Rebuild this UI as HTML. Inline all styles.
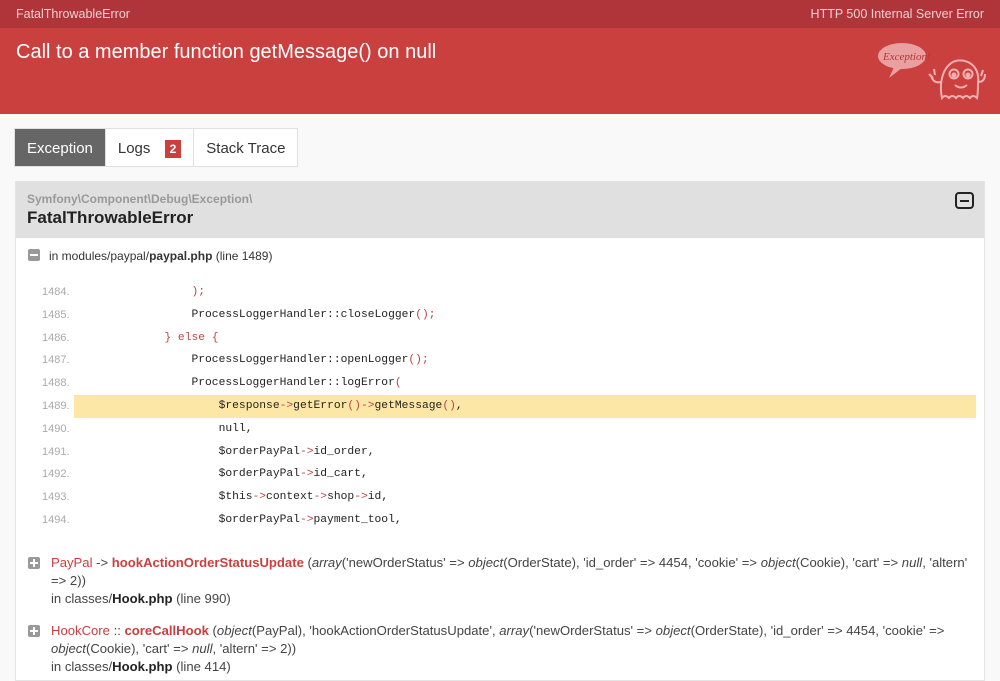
<!DOCTYPE html>
<html><head><meta charset="utf-8"><style>
*{margin:0;padding:0;box-sizing:border-box}
body{width:1000px;height:677px;overflow:hidden;background:#f9f9f9;font-family:"Liberation Sans",sans-serif;color:#222}
.top{height:28px;background:#b0353a;color:#f1d0d0;font-size:12.5px;display:flex;justify-content:space-between;align-items:center;padding:0 16px}
.hd{height:86px;background:#c9403e;color:#fff;font-size:20px;padding:13px 16px;position:relative}
.tabs{position:absolute;left:14px;top:128px;display:flex;height:39px;border:1px solid #e0e0e0;background:#fff}
.tab{padding:0 12px;font-size:15px;line-height:39px;color:#333;border-right:1px solid #e0e0e0}
.tab.a{background:#666;color:#fff}
.bd{display:inline-block;background:#c9403e;color:#fff;font-weight:bold;font-size:12px;line-height:18px;padding:0 5px;margin-left:10px}
.pan{position:absolute;left:15px;top:181px;width:970px;height:500px;background:#fff;border:1px solid #e4e4e4}
.ph{height:56px;background:#e0e0e0;padding:10px 11px}
.ns{font-size:12px;color:#999;font-weight:bold}
.cl{font-size:17px;font-weight:bold;color:#222;margin-top:2px}
.mi{position:absolute;right:10px;top:10px;width:19px;height:17px;border:2px solid #222;border-radius:4px}
.mi:after{content:"";position:absolute;left:3px;right:3px;top:5.5px;height:2px;background:#222}
.ic{display:inline-block;width:12px;height:12px;background:#999;border-radius:2px;position:relative;vertical-align:-1px;margin-right:9px}
.ic:after{content:"";position:absolute;left:2px;right:2px;top:5px;height:2px;background:#fff}
.ic.p{position:absolute;left:-23px;top:3px;margin:0}
.ic.p:before{content:"";position:absolute;top:2px;bottom:2px;left:5px;width:2px;background:#fff}
.fl{position:absolute;left:12px;font-size:12px;color:#333}
.code{position:absolute;left:0;top:99px;width:960px;font-family:"Liberation Mono",monospace;font-size:11.3px}
.ln{height:22.8px;line-height:22.8px;position:relative;color:#222}
.ln .n{position:absolute;left:26px;color:#aaa;font-family:"Liberation Sans",sans-serif;font-size:11px}
.ln .c{position:absolute;left:67px;white-space:pre}
.ln.h{background:#fde7a7;margin-left:58px}
.ln.h .n{left:-32px}.ln.h .c{left:9px}
.r{color:#b44}
.tr{position:absolute;left:35px;font-size:13.1px;color:#444;line-height:18px;width:930px}
.tr .k{color:#c9403e}.tr .f{color:#c9403e;font-weight:bold}
</style></head><body>
<div class="top"><span>FatalThrowableError</span><span>HTTP 500 Internal Server Error</span></div>
<div class="hd">Call to a member function getMessage() on null
<svg style="position:absolute;right:12px;top:10px" width="112" height="66" viewBox="0 0 112 66" fill="none" stroke="#f2b0b0" stroke-width="2">
<ellipse cx="26" cy="18" rx="24" ry="13" fill="#e9a0a0" stroke="none"/><path d="M18 29 l-5 11 l13-10" fill="#e9a0a0" stroke="none"/>
<text x="7" y="22" font-family="Liberation Serif" font-style="italic" font-size="11" fill="#b33" stroke="none">Exception!</text>
<path d="M66 60 q-3-14 2-26 q8-16 24-10 q12 6 10 22 q0 10 -1 14 q-4-4-7 0 q-4-4-7 0 q-4-4-7 0 q-4-4-7 0 q-4-4-7 0z"/>
<circle cx="78" cy="36" r="4.5"/><circle cx="92" cy="36" r="4.5"/><circle cx="78" cy="37" r="1.5" fill="#f2b0b0"/><circle cx="92" cy="37" r="1.5" fill="#f2b0b0"/>
<path d="M79 47 q6 5 12 0"/><path d="M65 44 q-8 2-10-7 M57 40 l-4-4 M59 37 l-1-6"/><path d="M102 44 q7 0 7-8 M105 38 l2-6"/>
</svg></div>
<div class="tabs"><div class="tab a">Exception</div><div class="tab">Logs <span class="bd">2</span></div><div class="tab" style="border:0">Stack Trace</div></div>
<div class="pan">
<div class="ph"><div class="ns">Symfony\Component\Debug\Exception\</div><div class="cl">FatalThrowableError</div><div class="mi"></div></div>
<div class="fl" style="top:67px"><span class="ic"></span>in modules/paypal/<b>paypal.php</b> (line 1489)</div>
<div class="code">
<div class="ln"><span class="n">1484.</span><span class="c">                <span class="r">);</span></span></div>
<div class="ln"><span class="n">1485.</span><span class="c">                ProcessLoggerHandler::closeLogger<span class="r">();</span></span></div>
<div class="ln"><span class="n">1486.</span><span class="c">            <span class="r">} else {</span></span></div>
<div class="ln"><span class="n">1487.</span><span class="c">                ProcessLoggerHandler::openLogger<span class="r">();</span></span></div>
<div class="ln"><span class="n">1488.</span><span class="c">                ProcessLoggerHandler::logError<span class="r">(</span></span></div>
<div class="ln h"><span class="n">1489.</span><span class="c">                    $response<span class="r">-&gt;</span>getError<span class="r">()-&gt;</span>getMessage<span class="r">()</span>,</span></div>
<div class="ln"><span class="n">1490.</span><span class="c">                    null,</span></div>
<div class="ln"><span class="n">1491.</span><span class="c">                    $orderPayPal<span class="r">-&gt;</span>id_order,</span></div>
<div class="ln"><span class="n">1492.</span><span class="c">                    $orderPayPal<span class="r">-&gt;</span>id_cart,</span></div>
<div class="ln"><span class="n">1493.</span><span class="c">                    $this<span class="r">-&gt;</span>context<span class="r">-&gt;</span>shop<span class="r">-&gt;</span>id,</span></div>
<div class="ln"><span class="n">1494.</span><span class="c">                    $orderPayPal<span class="r">-&gt;</span>payment_tool,</span></div>
</div>
<div class="tr" style="top:372px"><span class="ic p"></span><span class="k">PayPal</span> -&gt; <span class="f">hookActionOrderStatusUpdate</span> (<i>array</i>('newOrderStatus' =&gt; <i>object</i>(OrderState), 'id_order' =&gt; 4454, 'cookie' =&gt; <i>object</i>(Cookie), 'cart' =&gt; <i>null</i>, 'altern' =&gt; 2))<br>in classes/<b style="color:#222">Hook.php</b> (line 990)</div>
<div class="tr" style="top:440px"><span class="ic p"></span><span class="k">HookCore</span> :: <span class="f">coreCallHook</span> (<i>object</i>(PayPal), 'hookActionOrderStatusUpdate', <i>array</i>('newOrderStatus' =&gt; <i>object</i>(OrderState), 'id_order' =&gt; 4454, 'cookie' =&gt; <i>object</i>(Cookie), 'cart' =&gt; <i>null</i>, 'altern' =&gt; 2))<br>in classes/<b style="color:#222">Hook.php</b> (line 414)</div>
</div>
</body></html>
